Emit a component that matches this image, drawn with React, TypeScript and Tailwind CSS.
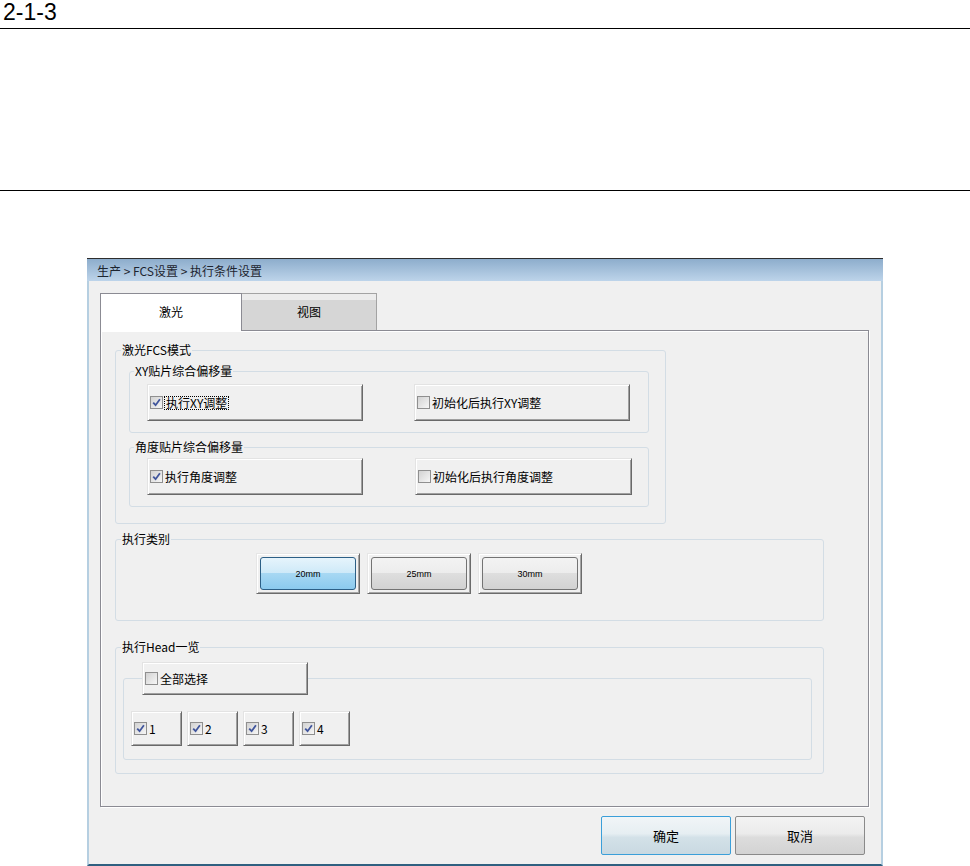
import React from "react";

const CJK = '"Noto Sans CJK SC", "Noto Sans", sans-serif';

function Check({ checked }: { checked: boolean }) {
  return (
    <span className="inline-flex w-[13px] h-[13px] shrink-0 items-center justify-center border border-[#8f8f8f] bg-[linear-gradient(135deg,#d2d2d2,#f6f6f6)]">
      {checked && (
        <svg width="9" height="9" viewBox="0 0 9 9">
          <path d="M1.2 4.6 L3.6 7.2 L7.9 1.3" stroke="#40559c" strokeWidth="1.8" fill="none" />
        </svg>
      )}
    </span>
  );
}

function OptBtn({
  label,
  checked,
  w,
  h,
  focus,
}: {
  label: string;
  checked: boolean;
  w: string;
  h: string;
  focus?: boolean;
}) {
  return (
    <div
      className={`${w} ${h} shrink-0 flex items-center gap-[1px] pl-[2px] bg-[#f0f0f0] border border-t-[#e3e3e3] border-l-[#e3e3e3] border-r-[#696969] border-b-[#696969] shadow-[inset_1px_1px_0_#ffffff,inset_-1px_-1px_0_#a0a0a0] text-[12px] leading-[14px] text-black`}
    >
      <Check checked={checked} />
      <span className={focus ? "border border-dotted border-black px-[1px] leading-[12px]" : "px-[1px]"}>{label}</span>
    </div>
  );
}

function SegBtn({ label, active }: { label: string; active?: boolean }) {
  return (
    <div className="w-[104px] h-[41px] shrink-0 flex p-[3px] bg-[#f0f0f0] border border-t-[#e6e6e6] border-l-[#e6e6e6] border-r-[#6b6b6b] border-b-[#6b6b6b] shadow-[inset_1px_1px_0_#ffffff,inset_-1px_-1px_0_#a5a5a5]">
      <div
        className={`flex-1 flex items-center justify-center rounded-[3px] border text-[9px] leading-[10px] text-black ${
          active
            ? "border-[#2c5f86] bg-[linear-gradient(#e6f4fc,#cde9f8_50%,#a7d8f3_50%,#8bcaee)]"
            : "border-[#737373] bg-[linear-gradient(#f3f3f3,#ececec_50%,#dedede_50%,#d2d2d2)]"
        }`}
        style={{ fontFamily: '"Liberation Sans", Arial, sans-serif' }}
      >
        {label}
      </div>
    </div>
  );
}

function Legend({ children, ml = "ml-[5px]" }: { children: React.ReactNode; ml?: string }) {
  return <legend className={`${ml} px-[1px] text-[12px] leading-[14px] text-black`}>{children}</legend>;
}

export default function App() {
  return (
    <div className="w-[970px] h-[866px] bg-white overflow-hidden flex flex-col" style={{ fontFamily: CJK }}>
      <div
        className="h-[28px] shrink-0 pl-[3px] text-[23px] leading-[24px] text-black"
        style={{ fontFamily: '"Liberation Sans", Arial, sans-serif' }}
      >
        2-1-3
      </div>
      <div className="h-px shrink-0 bg-black" />
      <div className="h-[161px] shrink-0" />
      <div className="h-px shrink-0 bg-black" />
      <div className="h-[67px] shrink-0" />

      {/* Dialog */}
      <div className="ml-[87px] w-[796px] h-[608px] shrink-0 flex flex-col">
        <div className="h-[23px] shrink-0 border-t border-[#2e2e2e] bg-[linear-gradient(#8dadcc,#bdd4ea)] flex items-center pl-[10px] pt-[1px] text-[12px] leading-[14px] text-[#1d2530]">
          生产 &gt; FCS设置 &gt; 执行条件设置
        </div>
        <div className="flex-1 flex flex-col bg-[#f0f0f0] border-x-2 border-x-[#b6cfe1] border-b-2 border-b-[#2f6080] pt-[12px] pl-[11px] pr-[12px]">
          {/* Tabs */}
          <div className="h-[37px] flex shrink-0">
            <div className="relative z-10 w-[142px] h-[38px] bg-white border-t border-x border-[#8b8b93] flex items-center justify-center pb-[1px] text-[12px] leading-[14px] text-black">
              激光
            </div>
            <div className="w-[135px] h-[37px] border-t border-r border-[#a3a3a3] bg-[linear-gradient(#ececec_0,#ececec_6px,#d6d6d6_6px)] flex items-center justify-center text-[12px] leading-[14px] text-black">
              视图
            </div>
          </div>

          {/* Panel */}
          <div className="w-[769px] h-[477px] shrink-0 border border-[#8b8b93] shadow-[inset_1px_1px_0_#ffffff,1px_1px_0_#ffffff] flex flex-col pl-[14px] pt-[12px]">
            {/* 激光FCS模式 */}
            <fieldset className="w-[551px] border border-[#d3dde5] rounded-[3px] pb-[16px]">
              <Legend>激光FCS模式</Legend>
              <fieldset className="mt-[7px] ml-[13px] w-[520px] border border-[#d3dde5] rounded-[3px] pt-[6px] pb-[11px]">
                <Legend ml="ml-[4px]">XY贴片综合偏移量</Legend>
                <div className="flex pl-[17px]">
                  <OptBtn label="执行XY调整" checked w="w-[216px]" h="h-[37px]" focus />
                  <div className="w-[51px]" />
                  <OptBtn label="初始化后执行XY调整" checked={false} w="w-[216px]" h="h-[37px]" />
                </div>
              </fieldset>
              <fieldset className="mt-[7px] ml-[13px] w-[520px] border border-[#d3dde5] rounded-[3px] pt-[4px] pb-[11px]">
                <Legend ml="ml-[4px]">角度贴片综合偏移量</Legend>
                <div className="flex pl-[17px]">
                  <OptBtn label="执行角度调整" checked w="w-[216px]" h="h-[37px]" />
                  <div className="w-[52px]" />
                  <OptBtn label="初始化后执行角度调整" checked={false} w="w-[217px]" h="h-[37px]" />
                </div>
              </fieldset>
            </fieldset>

            {/* 执行类别 */}
            <fieldset className="mt-[8px] w-[709px] border border-[#d3dde5] rounded-[3px] pt-[7px] pb-[26px]">
              <Legend>执行类别</Legend>
              <div className="flex gap-[7px] pl-[140px]">
                <SegBtn label="20mm" active />
                <SegBtn label="25mm" />
                <SegBtn label="30mm" />
              </div>
            </fieldset>

            {/* 执行Head一览 */}
            <fieldset className="mt-[19px] w-[709px] border border-[#d3dde5] rounded-[3px] pb-[13px]">
              <Legend>执行Head一览</Legend>
              <fieldset className="mt-[8px] ml-[7px] w-[689px] border border-[#d3dde5] rounded-[3px] pt-[16px] pb-[13px]">
                <legend className="ml-[18px] p-0">
                  <OptBtn label="全部选择" checked={false} w="w-[166px]" h="h-[33px]" />
                </legend>
                <div className="flex gap-[5px] pl-[7px]">
                  {["1", "2", "3", "4"].map((n) => (
                    <OptBtn key={n} label={n} checked w="w-[51px]" h="h-[35px]" />
                  ))}
                </div>
              </fieldset>
            </fieldset>
          </div>

          {/* Bottom buttons */}
          <div className="flex justify-end gap-[4px] mt-[9px] mr-[4px]">
            <div className="w-[130px] h-[39px] rounded-[2px] border border-[#3b9fd9] bg-[linear-gradient(#f1f5f7,#e6eef2_45%,#d3e1e8_55%,#c9d9e1)] flex items-center justify-center text-[13px] leading-[14px] text-black">
              确定
            </div>
            <div className="w-[130px] h-[39px] rounded-[2px] border border-[#8a8a8a] bg-[linear-gradient(#f3f3f3,#ebebeb_45%,#dcdcdc_55%,#d3d3d3)] flex items-center justify-center text-[13px] leading-[14px] text-black">
              取消
            </div>
          </div>
        </div>
      </div>
    </div>
  );
}
